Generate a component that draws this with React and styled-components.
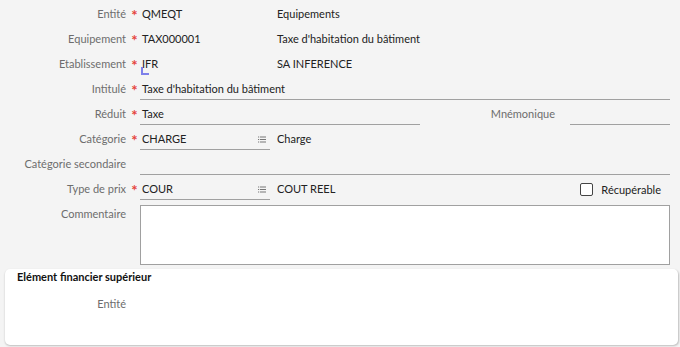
import React from 'react';
import styled, { createGlobalStyle } from 'styled-components';

const GlobalStyle = createGlobalStyle`
  html, body {
    margin: 0;
    padding: 0;
    background: #f4f4f4;
    font-family: Lato, "Open Sans", "Liberation Sans", sans-serif;
    font-size: 11px;
    color: #222;
  }
`;

const Page = styled.div`
  width: 680px;
  height: 347px;
  box-sizing: border-box;
  padding: 4px 10px 0 0;
  overflow: hidden;
`;

const Form = styled.div`
  display: flex;
  flex-direction: column;
  gap: 4px;
`;

const Row = styled.div`
  display: grid;
  grid-template-columns: ${p => p.$labelWidth || 126}px 14px 1fr;
  align-items: start;
`;

const Label = styled.div`
  height: 20px;
  line-height: 20px;
  text-align: right;
  color: #6d6d6d;
  white-space: nowrap;
`;

const Star = styled.div`
  height: 20px;
  line-height: 22px;
  text-align: center;
  color: #e5433b;
  font-size: 15px;
  font-weight: 700;
  padding-left: 3px;
  overflow: hidden;
`;

const Line = styled.div`
  display: flex;
  align-items: flex-start;
`;

const Field = styled.div`
  position: relative;
  box-sizing: border-box;
  height: 21px;
  line-height: 20px;
  padding: 0 2px;
  width: ${p => (p.$width ? `${p.$width}px` : 'auto')};
  flex: ${p => (p.$width ? 'none' : '1')};
  border-bottom: 1px solid ${p => (p.$plain ? 'transparent' : '#a0a0a0')};
  display: flex;
  align-items: center;
  justify-content: space-between;
  white-space: nowrap;
`;

const Desc = styled.div`
  height: 20px;
  line-height: 20px;
  padding-left: 7px;
  white-space: nowrap;
`;

const SideLabel = styled(Label)`
  flex: 1;
  padding-right: 15px;
`;

const Caret = styled.span`
  position: absolute;
  left: 1px;
  top: 13px;
  width: 6px;
  height: 6px;
  border-left: 2px solid #7d80ea;
  border-bottom: 2px solid #7d80ea;
`;

const ListIcon = () => (
  <svg width="8" height="7" viewBox="0 0 8 7" style={{ marginRight: 2 }}>
    <g fill="#777">
      <rect x="0" y="0.5" width="1.2" height="1" />
      <rect x="2" y="0.5" width="6" height="1" />
      <rect x="0" y="3" width="1.2" height="1" />
      <rect x="2" y="3" width="6" height="1" />
      <rect x="0" y="5.5" width="1.2" height="1" />
      <rect x="2" y="5.5" width="6" height="1" />
    </g>
  </svg>
);

const CheckWrap = styled.label`
  display: flex;
  align-items: center;
  gap: 8px;
  height: 20px;
  margin-left: auto;
  padding-right: 9px;
  color: #222;
`;

const Box = styled.span`
  display: inline-block;
  width: 13px;
  height: 13px;
  box-sizing: border-box;
  border: 1px solid #444;
  border-radius: 2px;
  background: #fff;
`;

const TextArea = styled.div`
  height: 60px;
  margin-top: 1px;
  box-sizing: border-box;
  background: #fff;
  border: 1px solid #a0a0a0;
`;

const Card = styled.section`
  margin: 4px -8px 0 5px;
  height: 76px;
  box-sizing: border-box;
  background: #fff;
  border-radius: 5px;
  box-shadow: 0.5px 1px 2px rgba(0, 0, 0, 0.22);
`;

const CardTitle = styled.h3`
  margin: 0;
  padding-left: 12px;
  height: 15px;
  line-height: 15px;
  font-size: 11px;
  font-weight: 700;
  color: #111;
`;

const CardBody = styled.div`
  padding-top: 10px;
`;

export default function App() {
  return (
    <Page>
      <GlobalStyle />
      <Form>
        <Row>
          <Label>Entité</Label>
          <Star>*</Star>
          <Line>
            <Field $width={130} $plain>QMEQT</Field>
            <Desc>Equipements</Desc>
          </Line>
        </Row>
        <Row>
          <Label>Equipement</Label>
          <Star>*</Star>
          <Line>
            <Field $width={130} $plain>TAX000001</Field>
            <Desc>Taxe d'habitation du bâtiment</Desc>
          </Line>
        </Row>
        <Row>
          <Label>Etablissement</Label>
          <Star>*</Star>
          <Line>
            <Field $width={130} $plain>IFR<Caret /></Field>
            <Desc>SA INFERENCE</Desc>
          </Line>
        </Row>
        <Row>
          <Label>Intitulé</Label>
          <Star>*</Star>
          <Line>
            <Field>Taxe d'habitation du bâtiment</Field>
          </Line>
        </Row>
        <Row>
          <Label>Réduit</Label>
          <Star>*</Star>
          <Line>
            <Field $width={280}>Taxe</Field>
            <SideLabel>Mnémonique</SideLabel>
            <Field $width={100} />
          </Line>
        </Row>
        <Row>
          <Label>Catégorie</Label>
          <Star>*</Star>
          <Line>
            <Field $width={130}>CHARGE<ListIcon /></Field>
            <Desc>Charge</Desc>
          </Line>
        </Row>
        <Row>
          <Label>Catégorie secondaire</Label>
          <Star />
          <Line>
            <Field />
          </Line>
        </Row>
        <Row>
          <Label>Type de prix</Label>
          <Star>*</Star>
          <Line>
            <Field $width={130}>COUR<ListIcon /></Field>
            <Desc>COUT REEL</Desc>
            <CheckWrap>
              <Box />
              Récupérable
            </CheckWrap>
          </Line>
        </Row>
        <Row>
          <Label>Commentaire</Label>
          <Star />
          <TextArea />
        </Row>
      </Form>
      <Card>
        <CardTitle>Elément financier supérieur</CardTitle>
        <CardBody>
          <Row $labelWidth={121}>
            <Label>Entité</Label>
            <Star />
            <div />
          </Row>
        </CardBody>
      </Card>
    </Page>
  );
}
